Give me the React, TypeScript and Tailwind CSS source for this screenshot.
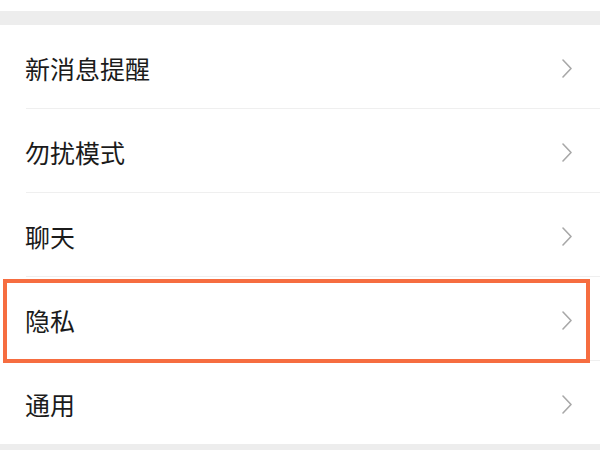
const items = ['新消息提醒', '勿扰模式', '聊天', '隐私', '通用'];

function Chevron() {
  return (
    <svg width="10" height="19" viewBox="0 0 10 19" fill="none">
      <polyline points="1,1 9,9.5 1,18" stroke="#a8a8a8" strokeWidth="1.6" strokeLinecap="round" strokeLinejoin="round" />
    </svg>
  );
}

export default function App() {
  return (
    <div className="w-[600px] h-[450px] overflow-hidden bg-white" style={{ fontFamily: '"Noto Sans CJK SC", "Noto Sans", sans-serif' }}>
      <div className="h-[11px] bg-white" />
      <div className="h-[14px] bg-[#ededed]" />
      {items.map((label, i) => (
        <div key={label} className="relative">
          <div className="flex h-[83px] items-center justify-between pl-[25px] pr-[28px] pt-[4px]">
            <span className="text-[25px] leading-none text-[#1b1b1b]">{label}</span>
            <Chevron />
          </div>
          {i < items.length - 1 && <div className="ml-[26px] h-px bg-[#efefef]" />}
          {label === '隐私' && (
            <div className="absolute left-[3px] top-[2px] h-[84px] w-[587px] border-4 border-[#f66d40]" />
          )}
        </div>
      ))}
      <div className="h-[20px] bg-[#ededed]" />
    </div>
  );
}
